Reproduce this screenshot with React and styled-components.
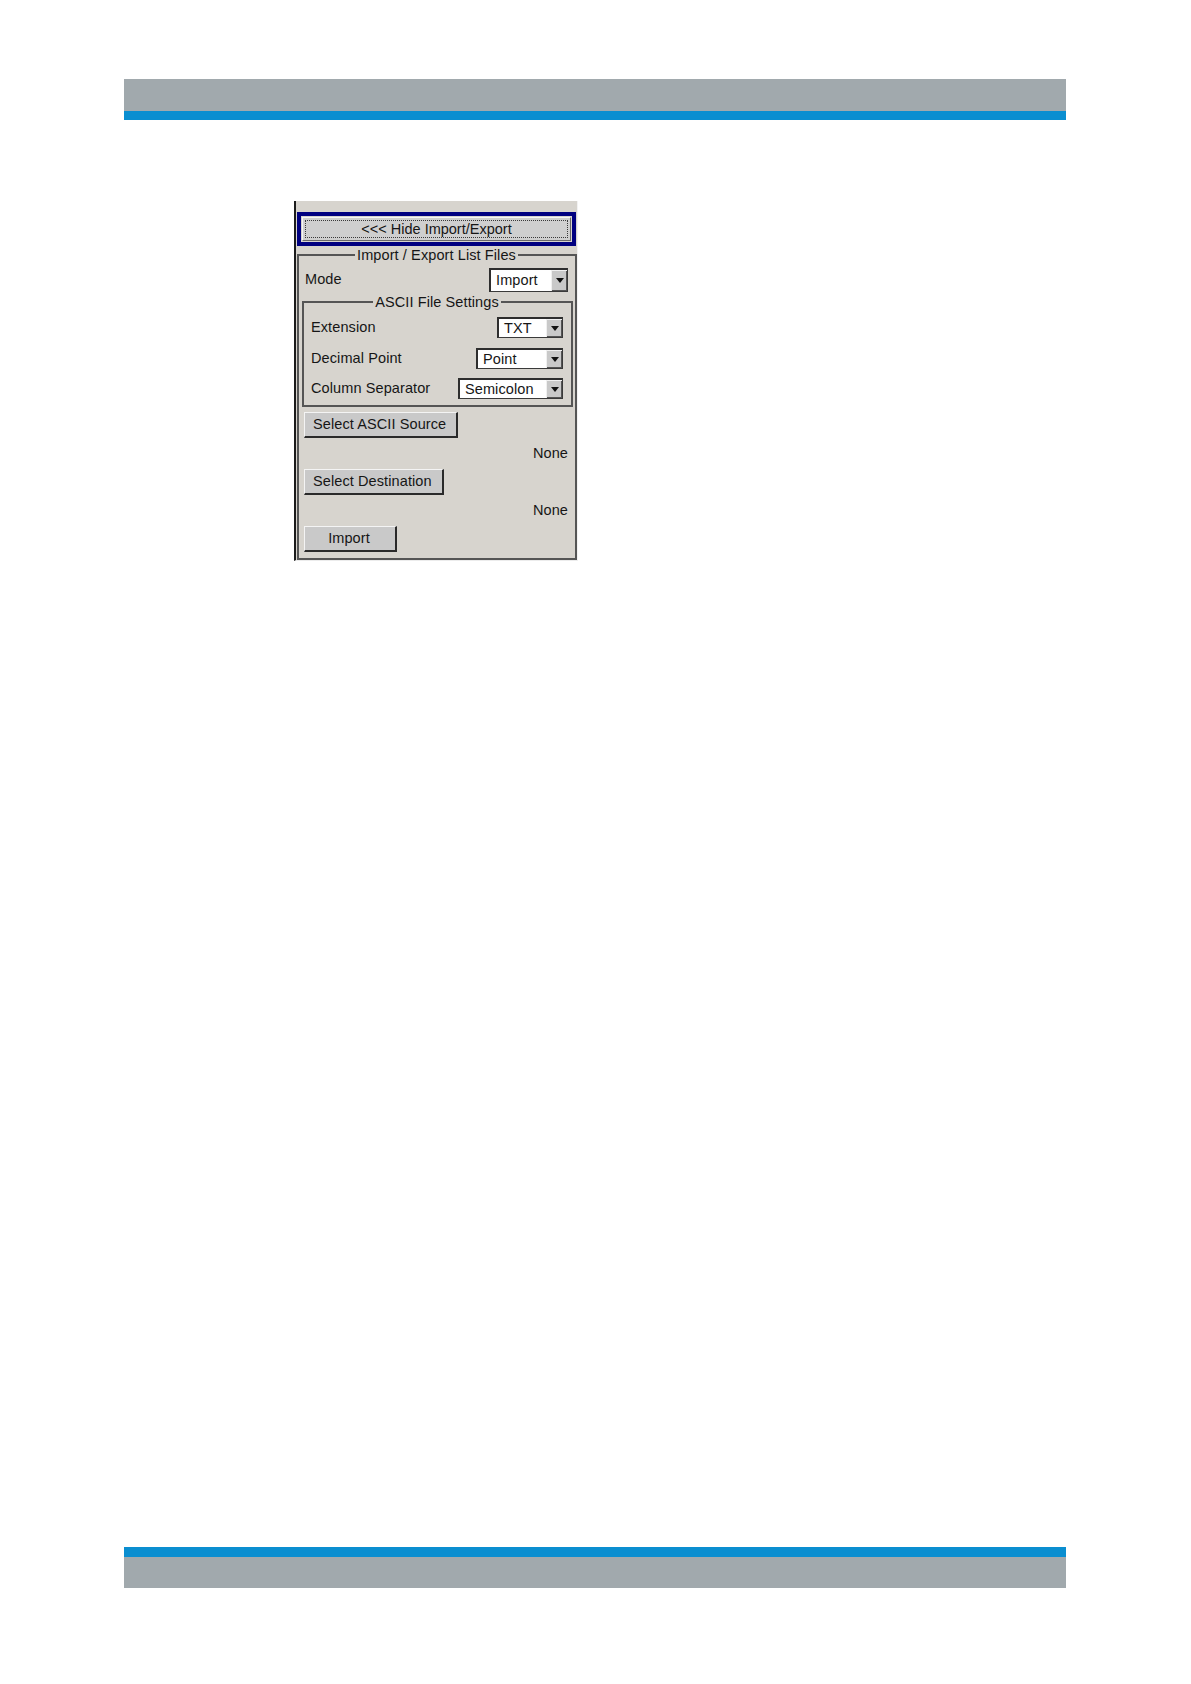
import React from 'react';
import styled, { createGlobalStyle } from 'styled-components';

const GlobalStyle = createGlobalStyle`
	html, body {
		margin: 0;
		padding: 0;
		background: #ffffff;
	}
	body {
		font-family: 'Liberation Sans', Arial, sans-serif;
	}
`;

const App = () => {
	return (
		<Page>
			<GlobalStyle />
			<Header>
				<GrayBand $h={32} />
				<BlueBand $h={9} />
			</Header>

			<Main>
				<Panel>
					<FocusFrame>
						<HideButton type="button">&lt;&lt;&lt; Hide Import/Export</HideButton>
					</FocusFrame>

					<OuterGroup>
						<Legend>Import / Export List Files</Legend>
						<Row $top={6}>
							<Label>Mode</Label>
							<Combo value="Import" $w={79} $h={24} />
						</Row>

						<InnerGroup>
							<Legend>ASCII File Settings</Legend>
							<Row $top={8}>
								<Label>Extension</Label>
								<Combo value="TXT" $w={66} $h={21} />
							</Row>
							<Row $top={10}>
								<Label>Decimal Point</Label>
								<Combo value="Point" $w={87} $h={21} />
							</Row>
							<Row $top={9}>
								<Label>Column Separator</Label>
								<Combo value="Semicolon" $w={105} $h={21} />
							</Row>
						</InnerGroup>

						<Actions>
							<PushButton type="button">Select ASCII Source</PushButton>
							<Status>None</Status>
							<PushButton type="button">Select Destination</PushButton>
							<Status>None</Status>
							<PushButton type="button" $min={93}>
								Import
							</PushButton>
						</Actions>
					</OuterGroup>
				</Panel>
			</Main>

			<Footer>
				<BlueBand $h={10} />
				<GrayBand $h={31} />
			</Footer>
		</Page>
	);
};

const Combo = ({ value, $w, $h }) => (
	<ComboBox $w={$w} $h={$h}>
		<ComboText>{value}</ComboText>
		<ComboArrow>
			<svg width="8" height="5" viewBox="0 0 8 5">
				<path d="M0 0 H8 L4 5 Z" fill="#111" />
			</svg>
		</ComboArrow>
	</ComboBox>
);

const Page = styled.div`
	width: 1191px;
	height: 1684px;
	display: flex;
	flex-direction: column;
	box-sizing: border-box;
	padding-top: 79px;
	padding-bottom: 96px;
`;

const Header = styled.header`
	margin-left: 124px;
	width: 942px;
	display: flex;
	flex-direction: column;
`;

const Footer = styled(Header).attrs({ as: 'footer' })``;

const GrayBand = styled.div`
	height: ${(p) => p.$h}px;
	background: #a1a9ad;
`;

const BlueBand = styled.div`
	height: ${(p) => p.$h}px;
	background: #0a8ed0;
`;

const Main = styled.main`
	flex: 1;
	padding: 81px 0 0 294px;
`;

const Panel = styled.section`
	width: 284px;
	height: 360px;
	box-sizing: border-box;
	background: #d7d4ce;
	border-left: 2px solid #1c1c1c;
	border-right: 1px solid #f2f2f2;
	border-bottom: 1px solid #ececec;
	padding: 11px 1px 0 1px;
	display: flex;
	flex-direction: column;
	font-size: 14.5px;
	letter-spacing: 0.1px;
	color: #161616;
`;

const FocusFrame = styled.div`
	width: 279px;
	height: 34px;
	box-sizing: border-box;
	border: 4px solid #000080;
	padding: 1px;
	display: flex;
`;

const HideButton = styled.button`
	flex: 1;
	margin: 0;
	padding: 0;
	background: #cfcfcf;
	border-top: 1px solid #f6f6f6;
	border-left: 1px solid #f6f6f6;
	border-right: 1px solid #6a6a6a;
	border-bottom: 1px solid #6a6a6a;
	outline: 1px dotted #3a3a3a;
	outline-offset: -4px;
	font-family: 'Liberation Sans', Arial, sans-serif;
	font-size: 14.5px;
	color: #161616;
	line-height: 1;
`;

const OuterGroup = styled.fieldset`
	width: 280px;
	height: 313px;
	box-sizing: border-box;
	margin: 2px 0 0 0;
	min-width: 0;
	border: 2px solid #555555;
	padding: 0 7px 0 6px;
	display: flex;
	flex-direction: column;
`;

const InnerGroup = styled.fieldset`
	margin: 3px -5px 0 -3px;
	min-width: 0;
	border: 2px solid #555555;
	padding: 0 8px 6px 7px;
	display: flex;
	flex-direction: column;
`;

const Legend = styled.legend`
	margin: 0 auto;
	padding: 0 2px;
	line-height: 14px;
	font-size: 14.5px;
	color: #161616;
`;

const Row = styled.div`
	display: flex;
	align-items: center;
	justify-content: space-between;
	margin-top: ${(p) => p.$top}px;
`;

const Label = styled.span`
	line-height: 17px;
`;

const ComboBox = styled.div`
	width: ${(p) => p.$w}px;
	height: ${(p) => p.$h}px;
	box-sizing: border-box;
	display: flex;
	align-items: stretch;
	background: #ffffff;
	border-top: 2px solid #2e2e2e;
	border-left: 2px solid #2e2e2e;
	border-right: 1px solid #3a3a3a;
	border-bottom: 1px solid #3a3a3a;
`;

const ComboText = styled.span`
	flex: 1;
	padding-left: 5px;
	display: flex;
	align-items: center;
	line-height: 1;
`;

const ComboArrow = styled.span`
	width: 15px;
	display: flex;
	align-items: center;
	justify-content: center;
	background: #c9c9c9;
	border-left: 1px solid #f0f0f0;
	border-top: 1px solid #f0f0f0;
	box-shadow: inset -1px -1px 0 #555555;
`;

const Actions = styled.div`
	margin-top: 5px;
	display: flex;
	flex-direction: column;
	align-items: flex-start;
	gap: 7px;
`;

const PushButton = styled.button`
	height: 26px;
	min-width: ${(p) => (p.$min ? `${p.$min}px` : 'auto')};
	margin: 0 0 0 -1px;
	padding: 0 10px 0 8px;
	box-sizing: border-box;
	background: #c9c9c9;
	border-top: 1px solid #f4f4f4;
	border-left: 1px solid #f4f4f4;
	border-right: 2px solid #2a2a2a;
	border-bottom: 2px solid #2a2a2a;
	font-family: 'Liberation Sans', Arial, sans-serif;
	font-size: 14.5px;
	letter-spacing: 0.1px;
	color: #161616;
	line-height: 1;
`;

const Status = styled.span`
	align-self: flex-end;
	line-height: 17px;
`;

export default App;
